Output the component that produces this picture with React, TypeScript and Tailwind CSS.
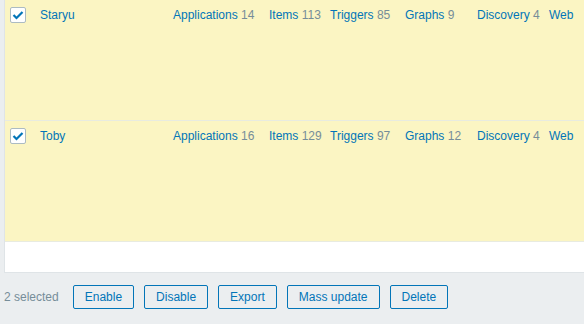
import React from "react";

const link = "text-[#0275b8]";
const cnt = "text-[#768d99]";

function Check() {
  return (
    <div className="w-[16px] h-[16px] border border-[#acbbc2] rounded-[2px] bg-white flex items-center justify-center">
      <svg width="12" height="10" viewBox="0 0 12 10">
        <path d="M1.5 5 L4.5 8 L10.5 2" stroke="#0275b8" strokeWidth="2.2" fill="none" />
      </svg>
    </div>
  );
}

function Row({ name, apps, items, triggers, graphs, disc }: { name: string; apps: number; items: number; triggers: number; graphs: number; disc: number }) {
  return (
    <div className="h-[121px] bg-[#fbf5c3] border-b border-[#e8ebe0] flex items-start">
      <div className="w-[35px] shrink-0 pl-[5px] pt-[7px]"><Check /></div>
      <div className={`w-[133px] shrink-0 pt-[8px] leading-[14px] ${link}`}>{name}</div>
      <div className="w-[96px] shrink-0 pt-[8px] leading-[14px]"><span className={link}>Applications</span> <span className={cnt}>{apps}</span></div>
      <div className="w-[61px] shrink-0 pt-[8px] leading-[14px]"><span className={link}>Items</span> <span className={cnt}>{items}</span></div>
      <div className="w-[75px] shrink-0 pt-[8px] leading-[14px]"><span className={link}>Triggers</span> <span className={cnt}>{triggers}</span></div>
      <div className="w-[72px] shrink-0 pt-[8px] leading-[14px]"><span className={link}>Graphs</span> <span className={cnt}>{graphs}</span></div>
      <div className="w-[72px] shrink-0 pt-[8px] leading-[14px]"><span className={link}>Discovery</span> <span className={cnt}>{disc}</span></div>
      <div className={`w-[60px] shrink-0 pt-[8px] leading-[14px] ${link}`}>Web</div>
    </div>
  );
}

function Btn({ children }: { children: React.ReactNode }) {
  return (
    <button className="h-[24px] px-[11px] border border-[#0275b8] rounded-[2px] text-[#0275b8] text-[12px] leading-[22px] bg-transparent">
      {children}
    </button>
  );
}

export default function App() {
  return (
    <div className="w-[584px] h-[324px] overflow-hidden bg-[#ebeef0] text-[12px]" style={{ fontFamily: '"Liberation Sans", Arial, sans-serif' }}>
      <div className="ml-[4px] w-[700px] h-[273px] bg-white border-l border-b border-[#dfe4e7]">
        <Row name="Staryu" apps={14} items={113} triggers={85} graphs={9} disc={4} />
        <Row name="Toby" apps={16} items={129} triggers={97} graphs={12} disc={4} />
      </div>
      <div className="flex items-center pl-[4px] pt-[12px] gap-[10px]">
        <span className="text-[#768d99] mr-[4px]">2 selected</span>
        <Btn>Enable</Btn>
        <Btn>Disable</Btn>
        <Btn>Export</Btn>
        <Btn>Mass update</Btn>
        <Btn>Delete</Btn>
      </div>
    </div>
  );
}
